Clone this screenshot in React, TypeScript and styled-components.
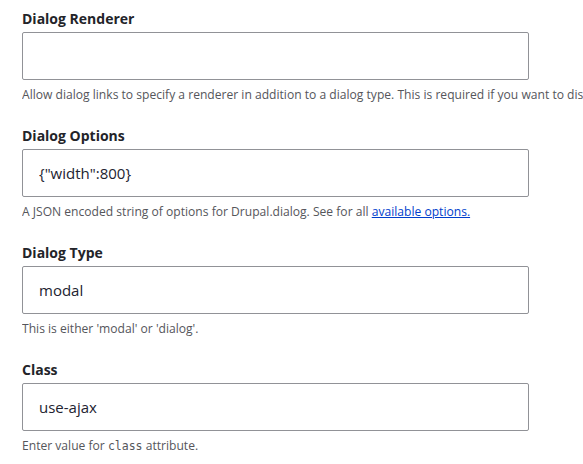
import React from "react";
import styled, { createGlobalStyle } from "styled-components";

const Global = createGlobalStyle`
  html, body { margin: 0; padding: 0; background: #fff; }
  body {
    font-family: "Open Sans", "Noto Sans", "Liberation Sans", sans-serif;
    color: #232429;
    overflow: hidden;
    width: 583px;
    height: 464px;
  }
`;

const Page = styled.div`
  padding: 10px 0 0 22px;
  display: flex;
  flex-direction: column;
  gap: 24px;
  width: 561px;
`;

const FormItem = styled.div`
  display: flex;
  flex-direction: column;
  min-width: 0;
`;

const Label = styled.label`
  display: block;
  font-size: 14px;
  font-weight: 700;
  line-height: 18px;
  margin-bottom: 4px;
  color: #232429;
`;

const Input = styled.input`
  box-sizing: border-box;
  width: 507px;
  height: 48px;
  padding: 12px 16px;
  border: 1px solid #919297;
  border-radius: 2px;
  font-family: inherit;
  font-size: 15px;
  line-height: 24px;
  color: #222330;
  background: #fff;
  outline: none;
`;

const Description = styled.div`
  margin-top: 6px;
  font-size: 12.1px;
  line-height: 17px;
  color: #55565b;
  white-space: nowrap;
  overflow: hidden;
`;

const Link = styled.a`
  color: #003ecc;
  text-decoration: underline;
`;

const Code = styled.code`
  font-family: "DejaVu Sans Mono", "Liberation Mono", monospace;
  font-size: 11.5px;
`;

export default function App() {
  return (
    <>
      <Global />
      <Page>
        <FormItem>
          <Label>Dialog Renderer</Label>
          <Input defaultValue="" />
          <Description>
            Allow dialog links to specify a renderer in addition to a dialog type. This is required if you want to display the dialog in an off-canvas tray.
          </Description>
        </FormItem>
        <FormItem>
          <Label>Dialog Options</Label>
          <Input defaultValue='{"width":800}' />
          <Description>
            A JSON encoded string of options for Drupal.dialog. See for all{" "}
            <Link href="#">available options.</Link>
          </Description>
        </FormItem>
        <FormItem>
          <Label>Dialog Type</Label>
          <Input defaultValue="modal" />
          <Description>This is either 'modal' or 'dialog'.</Description>
        </FormItem>
        <FormItem>
          <Label>Class</Label>
          <Input defaultValue="use-ajax" />
          <Description>
            Enter value for <Code>class</Code> attribute.
          </Description>
        </FormItem>
      </Page>
    </>
  );
}
